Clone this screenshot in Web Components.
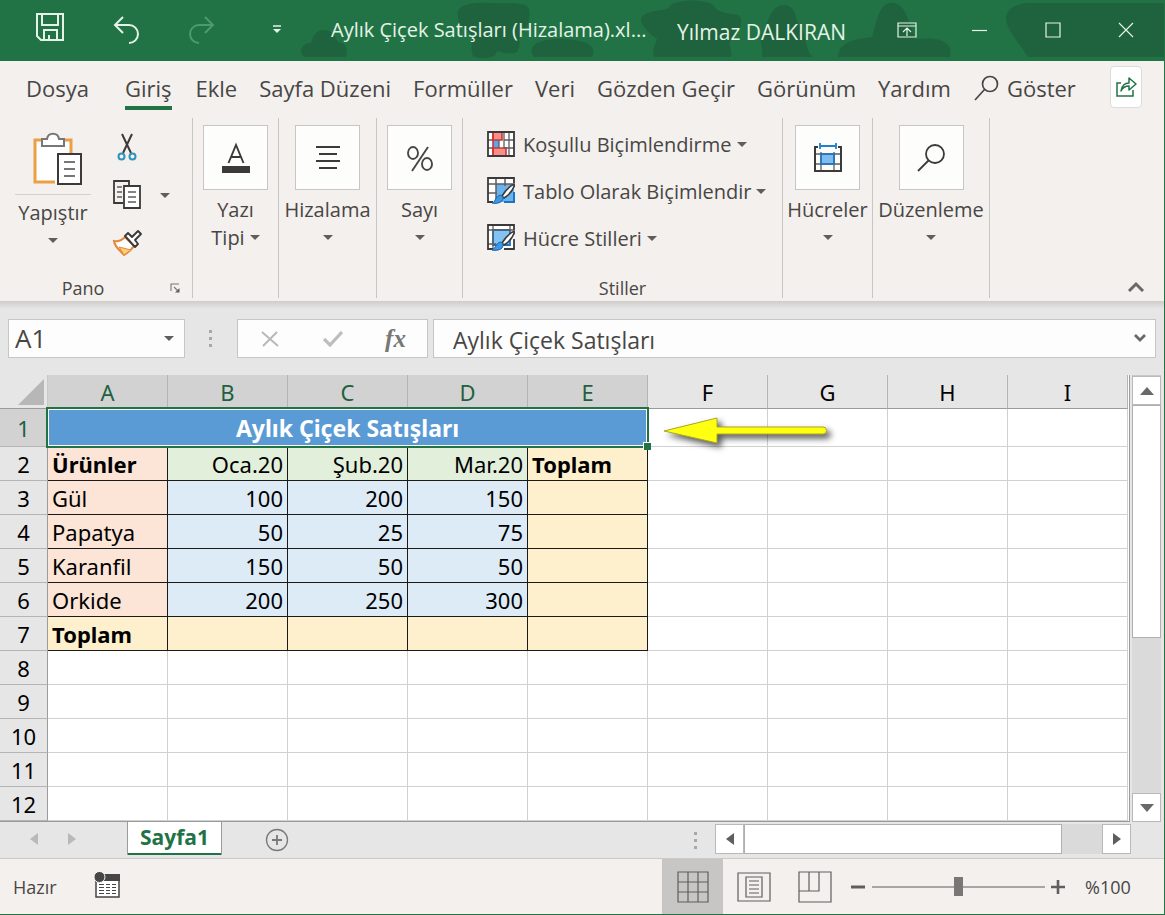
<!DOCTYPE html>
<html lang="tr">
<head>
<meta charset="utf-8">
<meta name="viewport" content="width=device-width, initial-scale=1">
<title>Aylık Çiçek Satışları (Hizalama)</title>
<style>
html, body { margin: 0; }
body {
  --green: #217346;
  --ribbon: #f3f0ee;
  --chrome: #e6e6e6;
  --ink: #484644;
  --ui: "Open Sans", "Noto Sans", sans-serif;
  --cell: "Noto Sans", "Open Sans", sans-serif;
  font-family: var(--ui);
  color: var(--ink);
}
</style>
</head>
<body>
<excel-app></excel-app>
<script>
const BASE = `
*, *::before, *::after { box-sizing: border-box; }
button { font: inherit; color: inherit; background: none; border: 0; padding: 0; margin: 0; display: inline-flex; align-items: center; justify-content: center; }
`;

function define(name, css, html) {
  const tpl = document.createElement('template');
  customElements.define(name, class extends HTMLElement {
    constructor() {
      super();
      this.attachShadow({ mode: 'open' });
    }
    connectedCallback() {
      if (this.shadowRoot.childNodes.length) return;
      tpl.innerHTML = `<style>${BASE}${css}</style>${typeof html === 'function' ? html(this) : html}`;
      this.shadowRoot.append(tpl.content.cloneNode(true));
    }
  });
}

const ICONS = {
  save: [30, 30, '<g fill="none" stroke="#e4f3e6" stroke-width="2"><path d="M2 2h26v26H6l-4-4zM7 2v11h16V2M9 28V18h13v10M14 28v-5"/></g>'],
  undo: [28, 28, '<g fill="none" stroke="#e4f3e6" stroke-width="2"><path d="M10 1 2 9l8 8M2 9h14a9 9 0 0 1 0 18"/></g>'],
  redo: [28, 28, '<g fill="none" stroke="#4f9a6c" stroke-width="2"><path d="m17 1 8 8-8 8M25 9H11a9 9 0 0 0 0 18"/></g>'],
  qat: [10, 10, '<path d="M1 1h8" stroke="#e4f3e6" stroke-width="1.5"/><path d="M1 4h8L5 8z" fill="#e4f3e6"/>'],
  display: [20, 16, '<g fill="none" stroke="#e4f3e6" stroke-width="1.2"><path d="M1 1h18v14H1zM1 4h18M10 14V6M6 10l4-4 4 4"/></g>'],
  min: [16, 16, '<path d="M0 8.5h15" stroke="#e4f3e6" stroke-width="1.2"/>'],
  max: [16, 16, '<path d="M1 1h14v14H1z" fill="none" stroke="#e4f3e6" stroke-width="1.2"/>'],
  close: [16, 16, '<path d="m1 1 14 14M15 1 1 15" stroke="#e4f3e6" stroke-width="1.2"/>'],
  search: [26, 26, '<g fill="none" stroke="#484644" stroke-width="1.7"><circle cx="16" cy="9" r="7.5"/><path d="M10.500 14.500 1 25"/></g>'],
  share: [22, 22, '<g fill="none" stroke="#217346" stroke-width="1.5"><path d="M6 7H2v13h16v-6"/><path d="M6 15c1-6 4-8 8-8V2l7 6-7 6v-4c-4 0-6 1-8 5z" stroke-linejoin="round"/></g>'],
  paste: [50, 54, '<path d="M3 9h36v42H3z" fill="#fff"/><path d="M8 8H2v42h20M31 8h7v13" fill="none" stroke="#eaa044" stroke-width="3"/><path d="M9 14V7h5c1-7 11-7 12 0h5v7z" fill="#fff" stroke="#797775" stroke-width="2"/><path d="M25 22h23v30H25z" fill="#fff" stroke="#3b3a39" stroke-width="2"/><path d="M31 30h11M31 37h11M31 44h11" stroke="#797775" stroke-width="2"/>'],
  cut: [20, 28, '<g fill="none"><path d="m5 1 9 19M15 1 6 20" stroke="#3b3a39" stroke-width="2"/><circle cx="4.500" cy="23.500" r="3" stroke="#2b93bd" stroke-width="2"/><circle cx="15.500" cy="23.500" r="3" stroke="#2b93bd" stroke-width="2"/></g>'],
  copy: [30, 30, '<g fill="none" stroke="#3b3a39" stroke-width="1.800"><path d="M11 23H2V1h15v4"/><path d="M12 6h16v22H12z" fill="#fff"/></g><path d="M5 7h5M5 12h5M5 17h5M16 12h8M16 17h8M16 22h8" stroke="#605e5c" stroke-width="1.600"/>'],
  brush: [30, 28, '<path d="M2 12c5 1 8-1 11-4l9 9c-2 3-5 6-10 9C9 22 3 19 2 12z" fill="#fff" stroke="#e5873c" stroke-width="2"/><path d="m7 18 12 3-7 5z" fill="#f8cf7a" stroke="#e5873c" stroke-width="1"/><path d="m13 7 3-3 4 4 6-6 3 3-6 6 3 4-3 3z" fill="#fff" stroke="#3b3a39" stroke-width="1.900" stroke-linejoin="round"/>'],
  font: [30, 32, '<path d="M7.500 21 15 3l7.500 18M10 15h10" fill="none" stroke="#3b3a39" stroke-width="1.900"/><path d="M1 24h28v7H1z" fill="#3b3a39"/>'],
  align: [26, 26, '<path d="M1 2h24M4 9h18M1 16h24M4 23h18" stroke="#3b3a39" stroke-width="1.800"/>'],
  percent: [28, 28, '<g fill="none" stroke="#484644" stroke-width="1.900"><ellipse cx="7" cy="9" rx="5" ry="6"/><ellipse cx="21" cy="20" rx="5" ry="6"/><path d="M22 3 6 27"/></g>'],
  cond: [28, 26, '<path d="M1 1h26v24H1z" fill="#fff"/><path d="M6 9h6v8H6z" fill="#5aa9e6"/><path d="M6 1h9v8H6zM6 17h13v8H6z" fill="#fa8f88" stroke="#d13438" stroke-width="1.600"/><path d="M12 9v8M22 1v24M17 9h10M17 17h10M17 1v16M1 9h5M1 17h5" fill="none" stroke="#605e5c" stroke-width="1.300"/><path d="M6 1v24" stroke="#d13438" stroke-width="1.600"/><path d="M1 1h26v24H1z" fill="none" stroke="#3b3a39" stroke-width="1.800"/>'],
  table: [28, 28, '<path d="M1 1h26v24H1z" fill="#fff"/><path d="M9 7h18v18H9z" fill="#69b3ee"/><path d="M9 1v24M18 1v8M1 7h26M1 16h9" fill="none" stroke="#605e5c" stroke-width="1.500"/><path d="M27 15v10H17" fill="none" stroke="#1a75c7" stroke-width="2"/><path d="M27 6V1H1v24h5" fill="none" stroke="#3b3a39" stroke-width="1.800"/><path d="M28 7c-6 2-10 7-13 12l2 2c5-3 9-7 11-14z" fill="#fff" stroke="#3b3a39" stroke-width="1.600"/><path d="M5 26c3 0 3-6 8-8 3 1 4 3 2 6-2 2-6 3-10 2z" fill="#3c98e0" stroke="#1a66b3"/>'],
  styles: [28, 28, '<path d="M1 1h26v24H1z" fill="#fff"/><path d="M6 6h17v15H6z" fill="#83c3f3" stroke="#1a75c7" stroke-width="1.800"/><path d="M6 1v24M23 1v5M1 6h26M1 20h8" fill="none" stroke="#605e5c" stroke-width="1.300"/><path d="M27 6V1H1v24h5M17 25h10V15" fill="none" stroke="#3b3a39" stroke-width="1.800"/><path d="M28 7c-6 2-10 7-13 12l2 2c5-3 9-7 11-14z" fill="#fff" stroke="#3b3a39" stroke-width="1.600"/><path d="M5 26c3 0 3-6 8-8 3 1 4 3 2 6-2 2-6 3-10 2z" fill="#3c98e0" stroke="#1a66b3"/>'],
  cells: [30, 30, '<path d="M8 11h14v10H8z" fill="#7fbdf0"/><path d="M8 9v19M21 9v19M2 11h26M2 21h26" fill="none" stroke="#605e5c" stroke-width="1.300"/><path d="M8 11h13v10H8z" fill="none" stroke="#1a75c7" stroke-width="1.500"/><path d="M5 4H2v24h26V4h-3" fill="none" stroke="#3b3a39" stroke-width="2"/><path d="M7 3h16M7 0v6M23 0v6" stroke="#1f82c8" stroke-width="1.800"/>'],
  find: [28, 28, '<g fill="none" stroke="#3b3a39" stroke-width="1.800"><circle cx="18" cy="10" r="9"/><path d="M11.500 16.500 1 27"/></g>'],
  caret: [10, 6, '<path d="M0 0h10L5 5z" fill="#605e5c"/>'],
  launch: [10, 10, '<path d="M1 8V1h8M4 4l4 4" fill="none" stroke="#797775" stroke-width="1.100"/><path d="M9.500 5v4.500H5z" fill="#605e5c"/>'],
  up: [18, 11, '<path d="m2 10 7-7 7 7" fill="none" stroke="#6b6967" stroke-width="3"/>'],
  down: [12, 9, '<path d="m1 1 5 5 5-5" fill="none" stroke="#6b6967" stroke-width="2.800"/>'],
  cancel: [18, 16, '<path d="m1 1 16 14M16 1 2 15" stroke="#b9b9b9" stroke-width="2"/>'],
  ok: [20, 16, '<path d="m1 8 6 6L19 1" fill="none" stroke="#bdbdbd" stroke-width="3.200"/>'],
  dots: [4, 18, '<path d="M0 0h3v3H0zM0 7h3v3H0zM0 14h3v3H0z" fill="#a8a8a8"/>'],
  triL: [8, 12, '<path d="M8 0v12L0 6z" fill="currentColor"/>'],
  triR: [8, 12, '<path d="M0 0v12l8-6z" fill="currentColor"/>'],
  triU: [14, 8, '<path d="M0 8h14L7 0z" fill="#6b6967"/>'],
  triD: [14, 8, '<path d="M0 0h14L7 8z" fill="#6b6967"/>'],
  add: [24, 24, '<g fill="none" stroke="#797979"><circle cx="12" cy="12" r="10.500" stroke-width="1.300"/><path d="M12 7v10M7 12h10" stroke-width="1.800"/></g>'],
  macro: [26, 26, '<path d="M2 4h23v21H2z" fill="#fff" stroke="#484644" stroke-width="1.500"/><path d="M8 2h18v7H8z" fill="#484644"/><circle cx="5.500" cy="5" r="5.500" fill="#484644" stroke="#f3f0ee"/><path d="M5 12.500h5M12 12.500h4M18 12.500h4M5 15.500h5M12 15.500h4M18 15.500h4M5 18.500h5M12 18.500h4M18 18.500h4M5 21.500h5M12 21.500h4M18 21.500h4" stroke="#484644" stroke-width="1.100"/>'],
  normal: [32, 32, '<path d="M1 1h30v30H1zM11 1v30M21 1v30M1 11h30M1 21h30" fill="none" stroke="#605e5c" stroke-width="1.200"/>'],
  page: [34, 30, '<path d="M1 1h32v28H1zM9 5h16v20H9zM12 9h10M12 13h10M12 17h10M12 21h10" fill="none" stroke="#605e5c" stroke-width="1.200"/>'],
  breaks: [34, 32, '<path d="M1 1h32v30H1zM1 20h20V1M11 1v19" fill="none" stroke="#605e5c" stroke-width="1.200"/>'],
  minus: [14, 4, '<path d="M0 2h14" stroke="#605e5c" stroke-width="3"/>'],
  plus: [14, 14, '<path d="M0 7h14M7 0v14" stroke="#605e5c" stroke-width="2.600"/>']
};

define('x-icon', ':host { display: inline-flex; flex: none; } svg { display: block; }', el => {
  const [w, h, body] = ICONS[el.getAttribute('name')];
  return `<svg width="${w}" height="${h}" viewBox="0 0 ${w} ${h}" aria-hidden="true">${body}</svg>`;
});

/* ---------- Title bar ---------- */
define('title-bar', `
:host { display: block; position: relative; height: 61px; background: var(--green); color: #e4f3e6; overflow: hidden; }
.art { position: absolute; inset: 0; }
.bar { position: relative; display: flex; align-items: center; height: 60px; padding: 0 2px 0 1px; }
button { flex: none; height: 60px; }
.save { width: 98px; padding-bottom: 6px; }
.undo { width: 56px; } .redo { width: 94px; } .qat { width: 56px; }
h1 { margin: 0 24px 0 26px; width: 322px; font: 400 20px/28px var(--ui); white-space: nowrap; flex: none; }
.user { font-size: 21px; line-height: 28px; white-space: nowrap; margin-top: 4px; }
.win { margin-left: auto; display: flex; }
.win button { width: 73px; }
`, `
<svg class="art" width="1165" height="61" aria-hidden="true"><g fill="#1e633d">
<path d="M305 57c-8-5-2-15 6-14 2-8 6-13 13-13 8 0 10 5 14 12 8 0 11 10 7 15z"/>
<path d="M458 17c-4-14 18-15 36-14 16 1 32-2 35 6 3 14-6 22-10 30 2 10-2 16-10 14-8 2-10-6-14 2-4 4-18 4-22 1-4-10 2-18-4-24-6-4-10-8-11-15z"/>
<path d="M534 57c-6-8 0-14 8-16 12-3 26-2 38 0 12 2 16 10 12 16z"/>
<path d="M655 57c-4-5 0-12 2-18-8-6-22-18-13-24 10-7 22-2 27-10 8-6 34-6 42 0 6 10 18 8 25 10 8 4 0 20-8 26-2 6 4 12 0 16z"/>
<path d="M762 57c2-8-4-18 0-24 6-8 8-28 22-28 14 1 10 16 17 22 6 10 4 24 12 30z"/>
<path d="M838 57c0-16 20-18 34-20 4-12 6-32 18-34 16-2 18 20 26 36 18-2 38 0 34 18z"/>
<path d="M1028 57c-6-10-22-28-22-38 0-10 8-14 20-16h139v54z"/></g></svg>
<div class="bar">
<button class="save" aria-label="Kaydet"><x-icon name="save"></x-icon></button>
<button class="undo" aria-label="Geri Al"><x-icon name="undo"></x-icon></button>
<button class="redo" aria-label="Yinele"><x-icon name="redo"></x-icon></button>
<button class="qat" aria-label="Hızlı Erişim"><x-icon name="qat"></x-icon></button>
<h1>Aylık Çiçek Satışları (Hizalama).xl...</h1>
<span class="user">Yılmaz DALKIRAN</span>
<div class="win">
<button aria-label="Şerit Görüntüleme"><x-icon name="display"></x-icon></button>
<button aria-label="Simge Durumu"><x-icon name="min"></x-icon></button>
<button aria-label="Ekranı Kapla"><x-icon name="max"></x-icon></button>
<button aria-label="Kapat"><x-icon name="close"></x-icon></button>
</div></div>`);

/* ---------- Ribbon tabs ---------- */
define('ribbon-tabs', `
:host { display: block; background: var(--ribbon); }
nav { display: flex; align-items: center; height: 57px; padding: 0 22px 0 15px; font-size: 22px; }
a { position: relative; flex: none; padding: 0 11px; height: 57px; line-height: 54px; color: inherit; text-decoration: none; white-space: nowrap; }
.file { margin-right: 14px; }
.on { margin-right: 2px; }
.on::after { content: ""; position: absolute; left: 11px; right: 11px; bottom: 8px; height: 4px; background: var(--green); }
.tell { margin-left: 12px; gap: 7px; padding-bottom: 4px; }
.share { margin: 0 0 5px auto; width: 32px; height: 42px; background: #fff; border: 1px solid #dedcda; border-radius: 4px; }
`, `<nav>
<a class="file" href="#dosya">Dosya</a><a class="on" href="#giris">Giriş</a><a href="#ekle">Ekle</a><a href="#sayfa">Sayfa Düzeni</a><a href="#formuller">Formüller</a><a href="#veri">Veri</a><a href="#gozden">Gözden Geçir</a><a href="#gorunum">Görünüm</a><a href="#yardim">Yardım</a>
<button class="tell"><x-icon name="search"></x-icon>Göster</button>
<button class="share" aria-label="Paylaş"><x-icon name="share"></x-icon></button>
</nav>`);

/* ---------- Ribbon ---------- */
define('ribbon-group', `
:host { display: flex; flex-direction: column; flex: none; height: 180px; border-right: 1px solid #c8c6c4; }
.body { flex: 1; min-height: 0; }
.foot { display: flex; align-items: center; height: 20px; font-size: 18px; line-height: 20px; padding: 0 12px; }
.foot span { flex: 1; text-align: center; }
::slotted([slot="launch"]) { margin-left: 16px; }
`, el => `<div class="body"><slot></slot></div>${el.hasAttribute('label') ? `<div class="foot"><span>${el.getAttribute('label')}</span><slot name="launch"></slot></div>` : ''}`);

define('big-button', `
:host { display: block; }
button { width: 100%; padding-top: 7px; flex-direction: column; font-size: 20px; line-height: 28px; white-space: nowrap; }
.box { width: 65px; height: 65px; display: flex; align-items: center; justify-content: center; background: #fdfdfb; border: 1px solid #c8c6c4; margin-bottom: 6px; }
.second { display: flex; align-items: center; justify-content: center; gap: 5px; height: 28px; }
`, el => `<button><span class="box"><x-icon name="${el.getAttribute('icon')}"></x-icon></span><slot></slot><span class="second"><slot name="more"></slot><x-icon name="caret"></x-icon></span></button>`);

define('style-button', `
:host { display: block; }
button { height: 47px; gap: 8px; font-size: 20px; white-space: nowrap; }
button > x-icon { margin-bottom: 2px; }
.t { display: inline-flex; align-items: center; gap: 5px; }
`, el => `<button><x-icon name="${el.getAttribute('icon')}"></x-icon><span class="t"><slot></slot><x-icon name="caret"></x-icon></span></button>`);

define('ribbon-bar', `
:host { display: flex; background: var(--ribbon); padding-bottom: 3px; }
.g193 { width: 193px; } .g86 { width: 86px; } .g98 { width: 98px; } .g320 { width: 320px; } .g90 { width: 90px; } .g117 { width: 117px; }
.clip { display: grid; grid-template-columns: 76px 46px 24px; column-gap: 5px; padding-left: 15px; }
.paste { flex-direction: column; justify-content: flex-start; font-size: 20px; padding-top: 14px; }
.paste x-icon[name="paste"] { margin-left: 9px; }
.pt { width: 100%; border-top: 1px solid #d2d0ce; margin-top: 8px; padding-top: 4px; line-height: 28px; margin-bottom: 11px; }
.small { display: grid; grid-template-rows: repeat(3, 48px); padding-top: 5px; padding-left: 16px; }
.small button { justify-self: center; }
.drop { height: 48px; margin: 54px 0 0 12px; width: 12px; }
.list { padding: 3px 0 0 24px; }
.collapse { margin: 0 19px 6px auto; align-self: flex-end; }
`, `
<ribbon-group class="g193" label="Pano"><div class="clip">
<button class="paste"><x-icon name="paste"></x-icon><span class="pt">Yapıştır</span><x-icon name="caret"></x-icon></button>
<div class="small"><button aria-label="Kes"><x-icon name="cut"></x-icon></button><button aria-label="Kopyala"><x-icon name="copy"></x-icon></button><button aria-label="Biçim Boyacısı"><x-icon name="brush"></x-icon></button></div>
<button class="drop" aria-label="Kopyalama seçenekleri"><x-icon name="caret"></x-icon></button>
</div><x-icon slot="launch" name="launch"></x-icon></ribbon-group>
<ribbon-group class="g86"><big-button icon="font">Yazı<span slot="more">Tipi</span></big-button></ribbon-group>
<ribbon-group class="g98"><big-button icon="align">Hizalama</big-button></ribbon-group>
<ribbon-group class="g86"><big-button icon="percent">Sayı</big-button></ribbon-group>
<ribbon-group class="g320" label="Stiller"><div class="list">
<style-button icon="cond">Koşullu Biçimlendirme</style-button>
<style-button icon="table">Tablo Olarak Biçimlendir</style-button>
<style-button icon="styles">Hücre Stilleri</style-button></div></ribbon-group>
<ribbon-group class="g90"><big-button icon="cells">Hücreler</big-button></ribbon-group>
<ribbon-group class="g117"><big-button icon="find">Düzenleme</big-button></ribbon-group>
<button class="collapse" aria-label="Şeridi Daralt"><x-icon name="up"></x-icon></button>`);

/* ---------- Formula bar ---------- */
define('formula-bar', `
:host { display: flex; height: 74px; padding: 18px 8px 17px; background: linear-gradient(#cfcdcb, var(--chrome) 8px); }
.box { display: flex; align-items: center; background: #fdfdfd; border: 1px solid #c6c6c6; }
.name { width: 177px; }
.tools { width: 191px; display: grid; grid-template-columns: repeat(3, 1fr); margin-right: 5px; }
.formula { flex: 1; min-width: 0; }
.dots { width: 52px; display: flex; align-items: center; justify-content: center; }
input { flex: 1; min-width: 0; width: 100%; height: 37px; border: 0; background: none; padding: 0 0 2px 6px; font: 26px var(--ui); color: inherit; outline: 0; }
.formula input { font-size: 23px; padding: 2px 0 0 19px; }
.name button, .formula button { width: 30px; height: 37px; }
.fx { font: italic 700 25px "Liberation Serif", serif; color: #797775; }
`, `
<div class="box name"><input aria-label="Ad Kutusu" value="A1"><button aria-label="Adlar"><x-icon name="caret"></x-icon></button></div>
<div class="dots"><x-icon name="dots"></x-icon></div>
<div class="box tools"><button aria-label="İptal"><x-icon name="cancel"></x-icon></button><button aria-label="Gir"><x-icon name="ok"></x-icon></button><button class="fx">fx</button></div>
<div class="box formula"><input aria-label="Formül Çubuğu" value="Aylık Çiçek Satışları"><button aria-label="Genişlet"><x-icon name="down"></x-icon></button></div>`);

/* ---------- Worksheet ---------- */
const ROWS = [
  ['Ürünler', 'Oca.20', 'Şub.20', 'Mar.20', 'Toplam'],
  ['Gül', '100', '200', '150', ''],
  ['Papatya', '50', '25', '75', ''],
  ['Karanfil', '150', '50', '50', ''],
  ['Orkide', '200', '250', '300', ''],
  ['Toplam', '', '', '', '']
];
function cellClass(r, c) {
  if (r === 5 || c === 4) return 'sum' + (r === 0 || c === 0 ? ' b' : '');
  if (c === 0) return 'item' + (r === 0 ? ' b' : '');
  return r === 0 ? 'month n' : 'num n';
}
function sheetRows() {
  const blank = n => '<td></td>'.repeat(n);
  let out = `<tr class="first"><th scope="row" class="sel">1</th><td colspan="5" class="title">Aylık Çiçek Satışları<span class="ring"></span></td>${blank(4)}</tr>`;
  for (let r = 0; r < 11; r++) {
    const cells = ROWS[r] ? ROWS[r].map((t, c) => `<td class="f ${cellClass(r, c)}">${t}</td>`).join('') : blank(5);
    out += `<tr><th scope="row">${r + 2}</th>${cells}${blank(4)}</tr>`;
  }
  return out;
}
define('work-sheet', `
:host { display: flex; flex: 1; background: var(--chrome); padding-right: 3px; font-family: var(--cell); font-size: 22px; color: #000; }
.view { position: relative; flex: 1; min-width: 0; overflow: hidden; border-right: 1px solid #9b9b9b; border-bottom: 1px solid #9b9b9b; background: #fff; margin-right: 2px; }
table { border-collapse: separate; border-spacing: 0; table-layout: fixed; width: 1128px; }
tr { height: 34px; } tr.first { height: 38px; }
th, td { padding: 0 4px; line-height: 32px; font-weight: 400; white-space: nowrap; border-right: 1px solid #d0d0d0; border-bottom: 1px solid #d0d0d0; text-align: left; }
th { background: var(--chrome); text-align: center; border-color: #b4b4b4; padding: 0; }
thead th { border-bottom-color: #9b9b9b; padding-top: 1px; }
tbody th { border-right-color: #9b9b9b; }
.sel { background: #d2d2d2; color: #1f6040; }
.corner { border-right-color: #c8c8c8; vertical-align: bottom; padding: 0 3px 3px 18px; }
.corner i { display: block; height: 26px; background: #b7b7b7; clip-path: polygon(100% 0, 100% 100%, 0 100%); }
.f { border-color: #1a1a1a; }
.item { background: #fce4d6; } .month { background: #e2efda; } .num { background: #ddebf7; } .sum { background: #fff0cd; }
.n { text-align: right; } .b { font-weight: 700; }
.title { position: relative; background: #5b9bd5; color: #fff; font-size: 23px; font-weight: 700; text-align: center; }
.ring { position: absolute; inset: -2px; border: 2px solid var(--green); box-shadow: inset 0 0 0 1px #fff; z-index: 1; }
.ring::after { content: ""; position: absolute; right: -4px; bottom: -4px; width: 8px; height: 8px; background: var(--green); border: solid #fff; border-width: 1px 0 0 1px; }
.arrow { position: absolute; left: 656px; top: 34px; }
.scroll { width: 29px; display: flex; flex-direction: column; background: #dadada; border-top: 1px solid #c8c8c8; }
.scroll button { height: 29px; background: #fff; border: 1px solid #b9b9b9; }
.thumb { height: 233px; background: #fff; border: 1px solid #b0b0b0; margin-bottom: auto; }
`, () => `
<div class="view"><table>
<colgroup><col style="width:48px">${'<col style="width:120px">'.repeat(9)}</colgroup>
<thead><tr><th class="corner"><i></i></th>${[...'ABCDEFGHI'].map((l, i) => `<th scope="col"${i < 5 ? ' class="sel"' : ''}>${l}</th>`).join('')}</tr></thead>
<tbody>${sheetRows()}</tbody></table>
<svg class="arrow" width="190" height="52" viewBox="0 0 190 52" aria-hidden="true"><path d="M8 22 61 9v9h106a3.500 3.500 0 0 1 0 7H61v9z" fill="#ffff10" stroke="#a8a820" style="filter: drop-shadow(4px 4px 3px rgba(0,0,0,.65))"/></svg>
</div>
<div class="scroll"><button aria-label="Yukarı"><x-icon name="triU"></x-icon></button><div class="thumb"></div><button aria-label="Aşağı"><x-icon name="triD"></x-icon></button></div>`);

/* ---------- Sheet tabs ---------- */
define('sheet-tabs', `
:host { display: flex; align-items: flex-start; height: 37px; background: var(--chrome); border-bottom: 1px solid #c9c9c9; padding-right: 33px; color: #b9b9b9; }
.nav { width: 38px; height: 34px; }
.prev { margin-left: 15px; } .next { margin-right: 36px; }
.tab { width: 95px; height: 33px; background: #fff; border: solid #9b9b9b; border-width: 0 1px; box-shadow: inset 0 -2px var(--green); color: var(--green); font-weight: 700; font-size: 21px; padding-bottom: 3px; }
.add { width: 110px; height: 36px; }
.dots { margin: 10px 17px 0 auto; }
.h { display: flex; width: 416px; height: 30px; margin-top: 2px; background: #dadada; color: #605e5c; }
.h button { width: 29px; background: #fff; border: 1px solid #b9b9b9; }
.thumb { width: 318px; background: #fff; border: 1px solid #b0b0b0; margin-right: auto; }
`, `
<button class="nav prev" aria-label="Önceki sayfa"><x-icon name="triL"></x-icon></button>
<button class="nav next" aria-label="Sonraki sayfa"><x-icon name="triR"></x-icon></button>
<button class="tab">Sayfa1</button>
<button class="add" aria-label="Yeni sayfa"><x-icon name="add"></x-icon></button>
<x-icon class="dots" name="dots"></x-icon>
<div class="h"><button aria-label="Sola"><x-icon name="triL"></x-icon></button><div class="thumb"></div><button aria-label="Sağa"><x-icon name="triR"></x-icon></button></div>`);

/* ---------- Status bar ---------- */
define('status-bar', `
:host { display: flex; align-items: center; height: 55px; background: var(--ribbon); font-size: 18px; padding: 0 32px 0 13px; }
.macro { margin-left: 37px; padding-bottom: 3px; }
.views { margin-left: auto; display: flex; }
.views button { width: 61px; height: 55px; }
.views .on { background: #c8c6c4; }
.zoom { display: flex; align-items: center; margin-left: 6px; }
.zoom button { height: 30px; width: 14px; }
input { appearance: none; -webkit-appearance: none; width: 173px; height: 20px; margin: 0 6px 0 7px; background: linear-gradient(#a8a6a4, #a8a6a4) center / 100% 2px no-repeat; }
input::-webkit-slider-thumb { -webkit-appearance: none; width: 9px; height: 19px; background: #797775; }
.pct { margin-left: 20px; width: 47px; line-height: 24px; }
`, `
<span>Hazır</span>
<button class="macro" aria-label="Makro Kaydet"><x-icon name="macro"></x-icon></button>
<div class="views"><button class="on" aria-label="Normal"><x-icon name="normal"></x-icon></button><button aria-label="Sayfa Düzeni"><x-icon name="page"></x-icon></button><button aria-label="Sayfa Sonu Önizleme"><x-icon name="breaks"></x-icon></button></div>
<div class="zoom"><button aria-label="Uzaklaştır"><x-icon name="minus"></x-icon></button><input type="range" aria-label="Yakınlaştırma" min="0" max="200" value="100"><button aria-label="Yakınlaştır"><x-icon name="plus"></x-icon></button><span class="pct">%100</span></div>`);

define('excel-app', `
:host { display: flex; flex-direction: column; min-height: 100vh; border: solid #217346; border-width: 0 1px 1px 0; box-sizing: border-box; }
`, `<title-bar></title-bar><ribbon-tabs></ribbon-tabs><ribbon-bar></ribbon-bar><formula-bar></formula-bar><work-sheet></work-sheet><sheet-tabs></sheet-tabs><status-bar></status-bar>`);
</script>
</body>
</html>
